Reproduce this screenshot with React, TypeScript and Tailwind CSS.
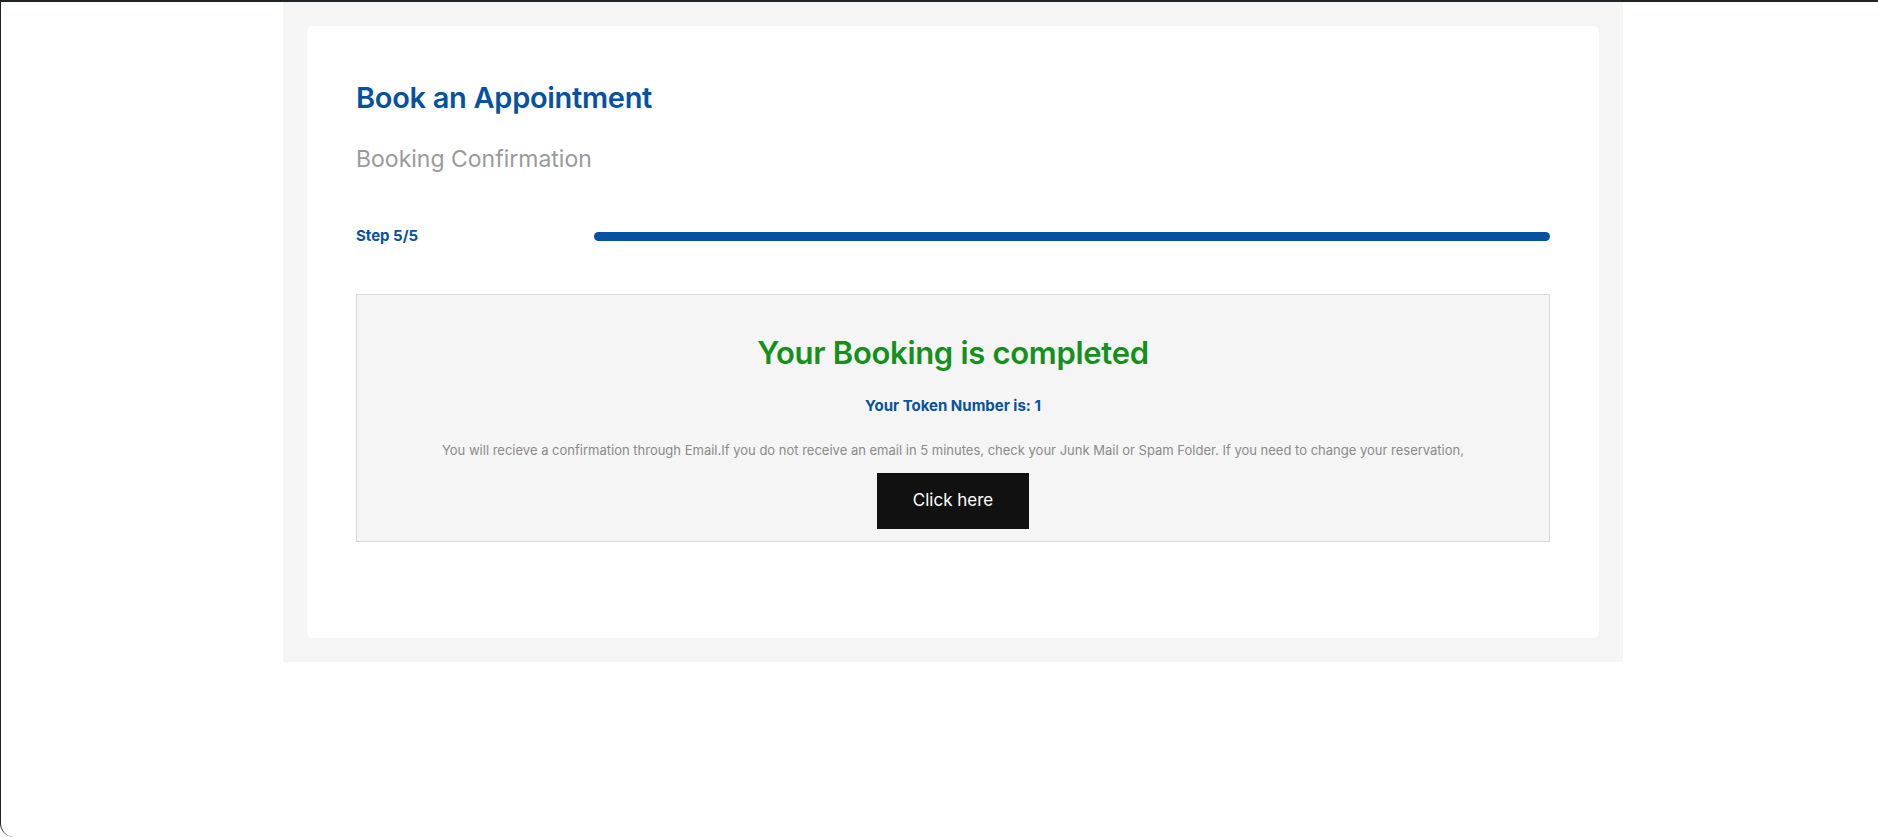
export default function App() {
  return (
    <div className="w-[1878px] h-[837px] bg-white border-t-2 border-l border-[#1f2227] rounded-bl-[14px] overflow-hidden" style={{ fontFamily: "Inter, 'Noto Sans', sans-serif" }}>
      <div className="ml-[282px] w-[1340px] bg-[#f5f5f5] p-[24px]">
        <div className="bg-white rounded-[6px] px-[49px] pt-[54px] pb-[96px]">
          <h1 className="text-[29px] leading-[36px] font-semibold text-[#0652a0] tracking-[-0.3px]">Book an Appointment</h1>
          <h2 className="mt-[27px] text-[23px] leading-[32px] text-[#9a9a9a]">Booking Confirmation</h2>
          <div className="mt-[51px] flex items-center h-[20px]">
            <span className="w-[238px] text-[15px] font-bold text-[#0652a0]">Step 5/5</span>
            <div className="flex-1 h-[9px] rounded-full bg-[#0652a0]" />
          </div>
          <div className="mt-[48px] bg-[#f5f5f5] border border-[#d9d9d9] pt-[38px] pb-[12px] flex flex-col items-center">
            <h3 className="text-[31px] leading-[40px] font-semibold text-[#14901c] tracking-[-0.3px]">Your Booking is completed</h3>
            <p className="mt-[21px] text-[15px] leading-[24px] font-bold text-[#0652a0]">Your Token Number is: 1</p>
            <p className="mt-[22px] text-[13px] leading-[20px] text-[#8a8a8a]">You will recieve a confirmation through Email.If you do not receive an email in 5 minutes, check your Junk Mail or Spam Folder. If you need to change your reservation,</p>
            <button className="mt-[13px] w-[152px] h-[56px] bg-[#111111] text-white text-[17px]">Click here</button>
          </div>
        </div>
      </div>
    </div>
  );
}
